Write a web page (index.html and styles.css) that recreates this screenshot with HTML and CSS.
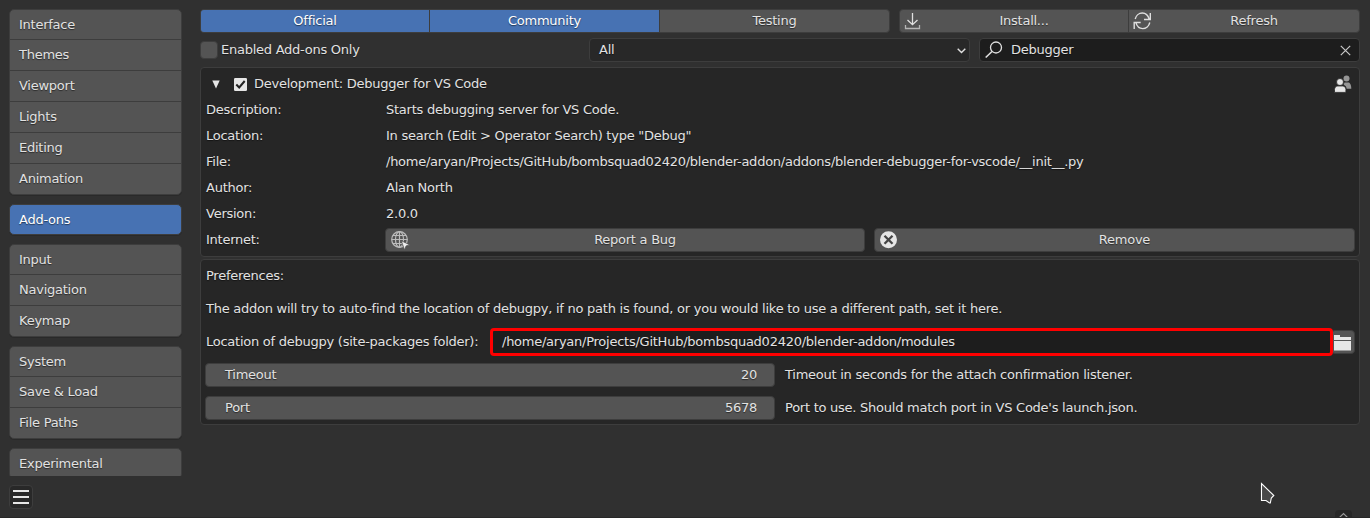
FILE: index.html
```html
<!DOCTYPE html>
<html lang="en">
<head>
<meta charset="utf-8">
<title>Preferences</title>
<link rel="stylesheet" href="styles.css">
</head>
<body>
<div class="window">
  <aside class="sidebar">
    <nav class="nav">
      <div class="group"><a>Interface</a><a>Themes</a><a>Viewport</a><a>Lights</a><a>Editing</a><a>Animation</a></div>
      <div class="group active"><a>Add-ons</a></div>
      <div class="group"><a>Input</a><a>Navigation</a><a>Keymap</a></div>
      <div class="group"><a>System</a><a>Save &amp; Load</a><a>File Paths</a></div>
      <div class="group"><a>Experimental</a></div>
    </nav>
    <div class="menu"><i></i><i></i><i></i></div>
  </aside>
  <main class="main">
    <div class="toolbar">
      <div class="segments tabs"><span class="on">Official</span><span class="on">Community</span><span>Testing</span></div>
      <div class="segments actions">
        <span><svg class="icon" width="18" height="18" viewBox="0 0 18 18" fill="none" stroke="#e0e0e0" stroke-width="1.3"><path d="M8.500 1v11.500M3.500 8l5 4.700 5-4.700"/><path stroke="#b5b5b5" d="M1.500 13v3.500h14V13"/></svg>Install...</span>
        <span><svg class="icon" width="19" height="18" viewBox="0 0 19 18" fill="none" stroke="#dedede" stroke-width="1.4"><path d="M2.200 7C3 3.500 6 1 9.300 1c3.200 0 5.800 2.200 6.900 6.200M17.300 1v6.500H11M16.800 10.500C16 14 13 16.600 9.700 16.600c-3.200 0-5.800-2.200-6.900-6.200M1.200 17v-6.500h6.500"/></svg>Refresh</span>
      </div>
    </div>
    <div class="filters">
      <div class="enabled"><i class="check"></i><span>Enabled Add-ons Only</span></div>
      <div class="select"><span>All</span><svg width="9" height="6" viewBox="0 0 9 6" fill="none" stroke="#e0e0e0" stroke-width="1.4"><path d="M.7.8l3.800 3.700L8.300.8"/></svg></div>
      <div class="search"><svg width="19" height="18" viewBox="0 0 19 18" fill="none" stroke="#e0e0e0" stroke-width="1.3"><circle cx="11" cy="6.500" r="5.500"/><path d="M7 10.500L.7 16.500" stroke-width="1.600"/></svg><span>Debugger</span><svg class="clear" width="11" height="11" viewBox="0 0 11 11" stroke="#c8c8c8" stroke-width="1.200"><path d="M.8.8l9.400 9.400M10.200.8L.8 10.200"/></svg></div>
    </div>
    <section class="box details">
      <header class="head">
        <svg width="8" height="9" viewBox="0 0 8 9"><path fill="#e6e6e6" d="M.3.5h7.400L4 8.500z"/></svg>
        <svg class="tick" width="13" height="13" viewBox="0 0 13 13"><rect width="13" height="13" rx="1.200" fill="#e6e6e6"/><path d="M2.300 6.500l2.900 3L10.700 3" fill="none" stroke="#222" stroke-width="2"/></svg>
        <span>Development: Debugger for VS Code</span>
        <svg class="people" width="18" height="18" viewBox="0 0 18 18"><g fill="#969696"><circle cx="12.500" cy="3.500" r="3"/><path d="M10.500 7.500h4.500c1.500 1 2.300 3.200 2.300 6.200h-4.800c0-2-1-3-2.800-3.900z"/></g><g fill="#e6e6e6" stroke="#262626" stroke-width=".8"><circle cx="6" cy="7" r="3.500"/><path d="M.5 17.400v-3c0-2 1.500-3.400 3.200-3.400h5c1.700 0 3.200 1.400 3.200 3.400v3z"/></g></svg>
      </header>
      <div class="row"><span>Description:</span><span>Starts debugging server for VS Code.</span></div>
      <div class="row"><span>Location:</span><span>In search (Edit &gt; Operator Search) type "Debug"</span></div>
      <div class="row"><span>File:</span><span>/home/aryan/Projects/GitHub/bombsquad02420/blender-addon/addons/blender-debugger-for-vscode/__init__.py</span></div>
      <div class="row"><span>Author:</span><span>Alan North</span></div>
      <div class="row"><span>Version:</span><span>2.0.0</span></div>
      <div class="row"><span>Internet:</span>
        <div class="buttons">
          <div class="button"><svg class="icon" width="19" height="19" viewBox="0 0 19 19" fill="none" stroke="#bcbcbc" stroke-width="1.200"><circle cx="8.500" cy="8.500" r="7.800"/><ellipse cx="8.500" cy="8.500" rx="4" ry="7.800"/><path d="M8.500.7v15.600M.7 8.500h15.600M2 4.500h13M2 12.500h10"/><path d="M10.300 9.700l8.500 4.200-3.700 1-1.600 4z" fill="#eee" stroke="#545454" stroke-width=".8"/></svg>Report a Bug</div>
          <div class="button"><svg class="icon" width="18" height="18" viewBox="0 0 18 18"><circle cx="8.500" cy="8.700" r="8.500" fill="#e6e6e6"/><path d="M4.500 4.700l8 8M12.500 4.700l-8 8" stroke="#454545" stroke-width="2.300"/></svg>Remove</div>
        </div>
      </div>
    </section>
    <section class="box prefs">
      <p>Preferences:</p>
      <p>The addon will try to auto-find the location of debugpy, if no path is found, or you would like to use a different path, set it here.</p>
      <div class="path"><span>Location of debugpy (site-packages folder):</span>
        <div class="field">/home/aryan/Projects/GitHub/bombsquad02420/blender-addon/modules</div>
        <div class="folder"><svg width="17" height="16" viewBox="0 0 17 16" fill="#e6e6e6"><path d="M0 0h6v2h11v3H0zM0 6h17v9.500H0z"/></svg></div>
      </div>
      <div class="param"><div class="number"><span>Timeout</span><span>20</span></div><span>Timeout in seconds for the attach confirmation listener.</span></div>
      <div class="param"><div class="number"><span>Port</span><span>5678</span></div><span>Port to use. Should match port in VS Code's launch.json.</span></div>
    </section>
  </main>
  <svg class="cursor" width="15" height="22" viewBox="0 0 15 22"><path d="M1.500 1.500v17H6l3.500 2.500h.8l1-5 2.500-2.500z" fill="#484848" stroke="#fff" stroke-width="1.100"/></svg>
  <div class="expander"><svg width="9" height="6" viewBox="0 0 9 6" fill="none" stroke="#999" stroke-width="1.200"><path d="M.5 5.500l4-4 4 4"/></svg></div>
</div>
</body>
</html>
```
FILE: styles.css
```css
* { box-sizing: border-box; }
body {
  margin: 0;
  background: #303030;
  color: #e2e2e2;
  font: 13px/24px "DejaVu Sans", sans-serif;
  letter-spacing: -.25px;
  text-shadow: 0 1px 1px rgba(0, 0, 0, .5);
  white-space: nowrap;
}
svg { display: block; flex: none; }
p { margin: 0; }
.window {
  position: relative;
  width: 1370px;
  height: 518px;
  padding: 9px 10px 0 9px;
  display: flex;
  gap: 18px;
  overflow: hidden;
  border-bottom: 1px solid #272727;
}
.sidebar { width: 173px; flex: none; }
.nav { height: 467px; display: flex; flex-direction: column; gap: 9px; overflow: hidden; }
.group { flex: none; border: 1px solid #3d3d3d; border-radius: 5px; background: #545454; box-shadow: 0 1px #292929; }
.group a { display: block; height: 31px; padding-left: 9px; line-height: 29px; border-top: 1px solid #3d3d3d; }
.group a:first-child { height: 29px; border-top: 0; }
.group.active { background: #4772b3; color: #fff; }
.group.active a { height: 29px; }
.menu {
  width: 24px; height: 24px; margin-top: 9px;
  display: flex; flex-direction: column; align-items: center; justify-content: center; gap: 4px;
  border: 1px solid #3d3d3d; border-radius: 4px; background: #282828;
}
.menu i { width: 16px; height: 2px; background: #e6e6e6; }
.main { width: 1160px; }
.toolbar { display: flex; gap: 9px; }
.segments {
  display: flex; height: 24px;
  border: 1px solid #3d3d3d; border-radius: 4px; background: #545454;
  overflow: hidden; text-align: center; line-height: 22px;
}
.segments span { position: relative; flex: 1; border-left: 1px solid #3d3d3d; }
.segments span:first-child { border-left: 0; }
.segments .on { background: #4772b3; color: #fff; }
.tabs { width: 690px; }
.tabs span:first-child { flex: 0 0 228px; }
.tabs span:nth-child(2) { flex: 0 0 230px; }
.actions { width: 461px; }
.actions span:first-child { flex: 0 0 228px; }
.actions span { padding-left: 20px; }
.icon { position: absolute; left: 4px; top: 2px; }
.filters { display: flex; margin-top: 5px; height: 24px; line-height: 22px; }
.enabled { width: 389px; display: flex; gap: 3px; line-height: 24px; }
.check { width: 18px; height: 18px; margin-top: 3px; border: 1px solid #3d3d3d; border-radius: 4px; background: #545454; }
.select, .search {
  width: 381px; display: flex; justify-content: space-between; align-items: center;
  border: 1px solid #3d3d3d; border-radius: 4px; background: #282828;
}
.select { padding: 0 3px 0 9px; }
.select svg { margin-top: 2px; }
.search { margin-left: 9px; padding: 0 8px 0 5px; background: #1d1d1d; justify-content: flex-start; }
.search span { margin-left: 7px; }
.clear { margin-left: auto; }
.box { border: 1px solid #3d3d3d; border-radius: 4px; background: #262626; }
.details { height: 190px; margin-top: 5px; padding: 2px 4px 0; }
.head { display: flex; align-items: center; height: 26px; padding: 2px 3px 0 7px; }
.head span { margin-left: 7px; }
.tick { margin: 1px 0 0 14px; }
.people { margin-left: auto; }
.row { display: grid; grid-template-columns: 180px 1fr; height: 26px; line-height: 28px; }
.row > span:first-child { padding-left: 1px; }
.row > span:last-child { padding-left: 1px; }
.buttons { display: flex; gap: 9px; margin-top: 2px; }
.button {
  position: relative; height: 24px; width: 480px; padding-left: 20px;
  border: 1px solid #3d3d3d; border-radius: 4px; background: #545454;
  text-align: center; line-height: 22px;
}
.button .icon { left: 5px; }
.button:last-child { width: 481px; }
.prefs { height: 166px; margin-top: 2px; padding: 4px 4px 0; }
.prefs p { height: 24px; line-height: 23px; margin-bottom: 9px; padding-left: 1px; }
.path { display: flex; height: 24px; margin-bottom: 9px; line-height: 22px; padding-left: 1px; }
.path > span { width: 284px; line-height: 24px; }
.field { position: relative; z-index: 1; width: 843px; height: 28px; margin: -2px 0; padding-left: 9px; border: 3px solid #f00; border-radius: 4px; background: #1d1d1d; }
.folder { width: 24px; height: 24px; margin-left: -2px; padding: 4px 0 0 2px; border: 1px solid #3d3d3d; border-radius: 4px; background: #545454; }
.param { display: flex; gap: 10px; height: 24px; margin-bottom: 9px; line-height: 24px; }
.number { width: 570px; display: flex; justify-content: space-between; padding: 0 17px 0 19px; border: 1px solid #3d3d3d; border-radius: 4px; background: #545454; line-height: 22px; }
.cursor { position: absolute; left: 1260px; top: 482px; }
.expander { position: absolute; left: 1335px; top: 510px; width: 17px; height: 10px; padding: 2px 4px; border-radius: 4px; background: #272727; }
```
